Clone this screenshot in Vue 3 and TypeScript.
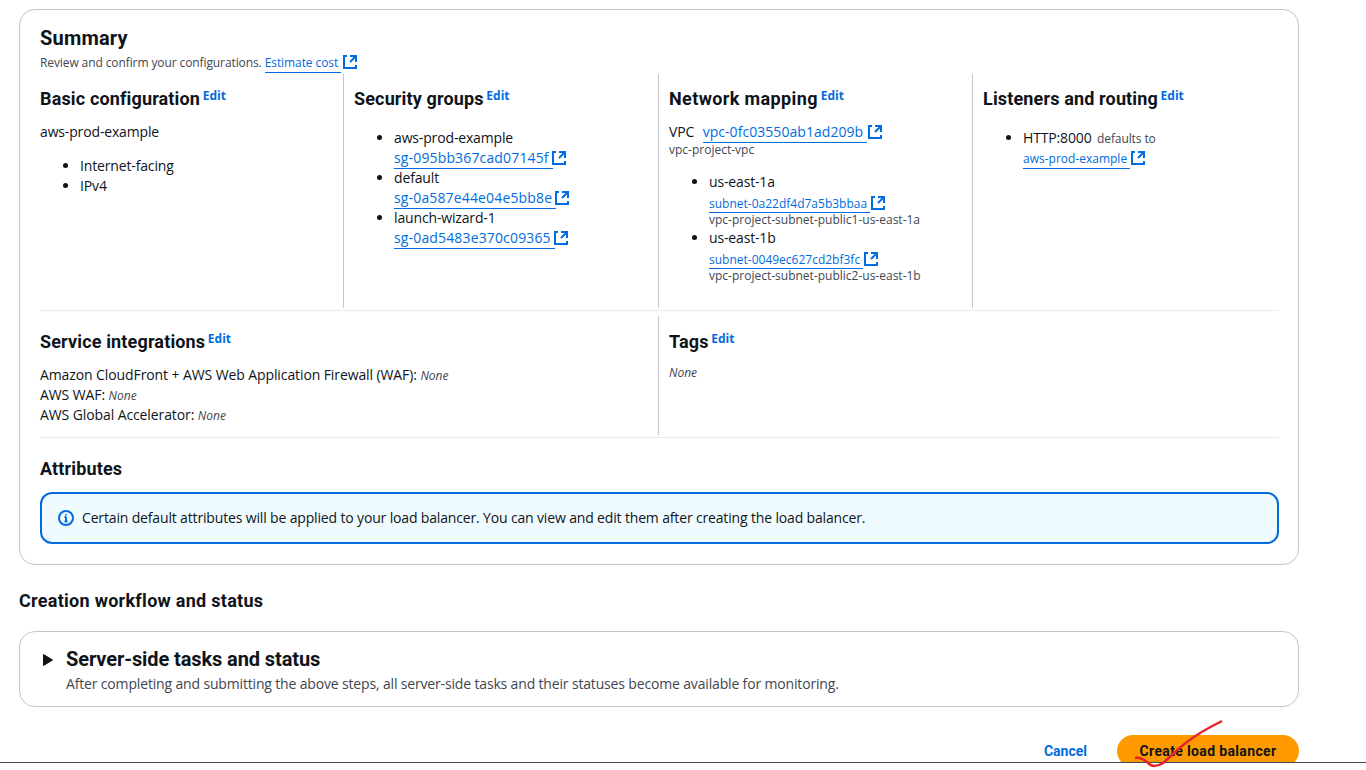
<script setup lang="ts">
const ext = { d1: 'M14 8.01v-6H8', d2: 'M14.01 2 8 8', d3: 'M5 2H2v12h12v-3' }
const groups = [
  { name: 'aws-prod-example', id: 'sg-095bb367cad07145f' },
  { name: 'default', id: 'sg-0a587e44e04e5bb8e' },
  { name: 'launch-wizard-1', id: 'sg-0ad5483e370c09365' },
]
const subnets = [
  { az: 'us-east-1a', id: 'subnet-0a22df4d7a5b3bbaa', name: 'vpc-project-subnet-public1-us-east-1a' },
  { az: 'us-east-1b', id: 'subnet-0049ec627cd2bf3fc', name: 'vpc-project-subnet-public2-us-east-1b' },
]
</script>

<template>
  <div class="shell">
    <div class="page">
      <section class="card summary">
        <h2>Summary</h2>
        <p class="desc">
          Review and confirm your configurations.
          <a class="link cost"><span class="u">Estimate cost&nbsp;</span><svg class="ext" viewBox="0 0 16 16"><path :d="ext.d1" /><path :d="ext.d2" /><path :d="ext.d3" /></svg></a>
        </p>

        <div class="row four">
          <div class="col">
            <h3>Basic configuration <sup>Edit</sup></h3>
            <p class="name">aws-prod-example</p>
            <ul class="basic">
              <li>Internet-facing</li>
              <li>IPv4</li>
            </ul>
          </div>
          <div class="col ruled">
            <h3>Security groups <sup>Edit</sup></h3>
            <ul class="groups">
              <li v-for="g in groups" :key="g.id">
                {{ g.name }}<br />
                <a class="link sgid"><span class="u">{{ g.id }}&nbsp;</span><svg class="ext" viewBox="0 0 16 16"><path :d="ext.d1" /><path :d="ext.d2" /><path :d="ext.d3" /></svg></a>
              </li>
            </ul>
          </div>
          <div class="col ruled">
            <h3 class="network">Network mapping <sup>Edit</sup></h3>
            <p class="vpc">VPC <a class="link vpcid"><span class="u">vpc-0fc03550ab1ad209b&nbsp;</span><svg class="ext" viewBox="0 0 16 16"><path :d="ext.d1" /><path :d="ext.d2" /><path :d="ext.d3" /></svg></a></p>
            <p class="small">vpc-project-vpc</p>
            <ul class="subnets">
              <li v-for="s in subnets" :key="s.id">
                <div class="az">{{ s.az }}</div>
                <a class="link sm block"><span class="u">{{ s.id }}&nbsp;</span><svg class="ext" viewBox="0 0 16 16"><path :d="ext.d1" /><path :d="ext.d2" /><path :d="ext.d3" /></svg></a>
                <div class="small">{{ s.name }}</div>
              </li>
            </ul>
          </div>
          <div class="col ruled">
            <h3>Listeners and routing <sup>Edit</sup></h3>
            <ul class="groups">
              <li>
                HTTP:8000 <span class="small defaults">defaults to</span><br />
                <a class="link sm"><span class="u">aws-prod-example&nbsp;</span><svg class="ext" viewBox="0 0 16 16"><path :d="ext.d1" /><path :d="ext.d2" /><path :d="ext.d3" /></svg></a>
              </li>
            </ul>
          </div>
        </div>

        <div class="row two">
          <div class="col">
            <h3>Service integrations <sup>Edit</sup></h3>
            <div class="services">
              <div>Amazon CloudFront + AWS Web Application Firewall (WAF): <em>None</em></div>
              <div>AWS WAF: <em>None</em></div>
              <div>AWS Global Accelerator: <em>None</em></div>
            </div>
          </div>
          <div class="col ruled">
            <h3>Tags <sup>Edit</sup></h3>
            <p class="none"><em>None</em></p>
          </div>
        </div>

        <h3 class="attr">Attributes</h3>
        <div class="alert">
          <svg class="info" viewBox="0 0 16 16"><circle cx="8" cy="8" r="7" /><path d="M8 11.500V7M6.500 7H8M6.500 11.500h3" /><path d="M8 4.200v1.200" /></svg>
          <span>Certain default attributes will be applied to your load balancer. You can view and edit them after creating the load balancer.</span>
        </div>
      </section>

      <h3 class="workflow">Creation workflow and status</h3>

      <section class="card tasks">
        <svg class="caret" viewBox="0 0 12 14"><path d="M1.500 1.500 10.500 7l-9 5.500z" /></svg>
        <div>
          <div class="tasks-title">Server-side tasks and status</div>
          <div class="tasks-desc">After completing and submitting the above steps, all server-side tasks and their statuses become available for monitoring.</div>
        </div>
      </section>

      <div class="actions">
        <a class="cancel">Cancel</a>
        <button class="primary">Create load balancer</button>
      </div>
    </div>

    <svg class="scribble" viewBox="0 0 92 52"><path d="M2 40c4-1 8 1 12 4 3 3 5 4 7 4 3 0 6-1 9-3 8-7 16-15 24-21 10-8 23-15 35-21" /></svg>
  </div>
</template>

<style>
html, body { margin: 0; background: #fff; overflow: hidden; }
</style>

<style scoped>
.shell { position: relative; height: 770px; overflow: hidden; }
.page {
  box-sizing: border-box;
  height: 763px;
  padding: 9px 67px 0 19px;
  overflow: hidden;
  border-bottom: 1px solid #414750;
  font-family: "Open Sans", "Noto Sans", sans-serif;
  font-size: 14px;
  line-height: 20px;
  letter-spacing: -0.15px;
  color: #0f141a;
}
h2, h3, p, ul { margin: 0; padding: 0; }
.card {
  box-sizing: border-box;
  width: 1280px;
  border: 1px solid #c6c6cd;
  border-radius: 16px;
}
.summary { height: 556px; padding: 15px 20px 0; }
h2, h3, .tasks-title, .cancel, .primary { font-family: Roboto, "Open Sans", sans-serif; }
h2 { font-size: 20px; line-height: 22px; padding-top: 2px; font-weight: 700; letter-spacing: 0.2px; }
.desc { font-size: 12px; line-height: 16px; height: 16px; color: #424650; margin-top: 5px; letter-spacing: -0.1px; white-space: nowrap; }
.link { color: #006ce0; white-space: nowrap; letter-spacing: 0; }
.cost { letter-spacing: -0.08px; }
.cost .ext { margin-left: 1px; }
.u { border-bottom: 1px solid #006ce0; padding-bottom: 1px; }
.ext { width: 16px; height: 16px; vertical-align: -3px; fill: none; stroke: #006ce0; stroke-width: 2; }
.sgid { letter-spacing: 0.15px; }
.sgid .ext { margin-left: -2px; }
.vpcid { letter-spacing: 0.05px; }
.row { display: grid; box-sizing: border-box; width: 1239px; border-bottom: 1px solid #e9ebed; }
.four {
  grid-template-columns: 303px 315px 314px 307px;
  height: 237px;
  padding-bottom: 2px;
  margin-top: 4px;
}
.two {
  grid-template-columns: 618px 621px;
  height: 127px;
  padding-top: 5px;
  padding-bottom: 2px;
}
.col { padding-top: 12px; min-width: 0; }
.two .col { padding-top: 13px; }
.ruled { border-left: 1px solid #c6c6cd; padding-left: 10px; }
h3 { font-size: 18px; line-height: 22px; padding-top: 2px; font-weight: 700; letter-spacing: 0.15px; }
.network { letter-spacing: 0.38px; }
sup { font-family: "Open Sans", sans-serif; font-size: 12px; line-height: 0; color: #006ce0; vertical-align: 5px; margin-left: -2px; letter-spacing: 0; }
.name { margin-top: 12px; }
ul { list-style: disc; padding-left: 40px; }
.basic { margin-top: 14px; }
.groups { margin-top: 18px; }
.vpc { margin-top: 12px; }
.vpc .link { margin-left: 5px; }
.small { font-size: 12px; line-height: 16px; color: #424650; letter-spacing: 0; }
.defaults { margin-left: 2px; letter-spacing: -0.1px; }
.subnets { margin-top: 14px; }
.az { line-height: 20px; }
.sm { font-size: 12px; }
.block { display: block; width: fit-content; height: 17px; line-height: 16px; margin-top: 3px; }
.block .u { padding-bottom: 0; }
.services { margin-top: 12px; letter-spacing: -0.1px; }
em { font-size: 12px; line-height: 1; color: #424650; letter-spacing: 0; }
.none { margin-top: 12px; font-size: 12px; line-height: 16px; }
.attr { margin-top: 18px; }
.alert {
  display: flex;
  align-items: center;
  gap: 8px;
  box-sizing: border-box;
  width: 1239px;
  height: 52px;
  margin-top: 12px;
  padding: 0 16px;
  background: #f0fbff;
  border: 2px solid #006ce0;
  border-radius: 12px;
  letter-spacing: -0.155px;
}
.info { width: 16px; height: 16px; flex: none; fill: none; stroke: #006ce0; stroke-width: 2; }
.workflow { margin-top: 23px; letter-spacing: 0.28px; }
.tasks {
  display: flex;
  align-items: flex-start;
  gap: 11px;
  height: 76px;
  margin-top: 19px;
  padding: 15px 20px 0;
}
.caret { width: 12px; height: 14px; margin-top: 6px; fill: #0f141a; stroke: #0f141a; stroke-width: 1; flex: none; margin-left: 2px; margin-right: 1px; }
.tasks-title { font-size: 20px; line-height: 24px; font-weight: 700; letter-spacing: -0.1px; }
.tasks-desc { font-size: 14px; line-height: 20px; color: #424650; margin-top: 3px; letter-spacing: -0.16px; }
.actions { display: flex; justify-content: flex-end; align-items: center; width: 1280px; gap: 30px; margin-top: 28px; }
.cancel { color: #006ce0; font-weight: 700; letter-spacing: 0; }
.primary {
  width: 182px;
  height: 32px;
  border: none;
  border-radius: 20px;
  background: #ff9900;
  color: #0f141a;
  font-size: 14px;
  line-height: 20px;
  font-weight: 700;
  letter-spacing: 0.35px;
  padding: 0;
}
.scribble {
  position: absolute;
  left: 1133px;
  top: 718px;
  width: 92px;
  height: 52px;
  fill: none;
  stroke: #e4232b;
  stroke-width: 2.5;
  overflow: visible;
}
</style>
